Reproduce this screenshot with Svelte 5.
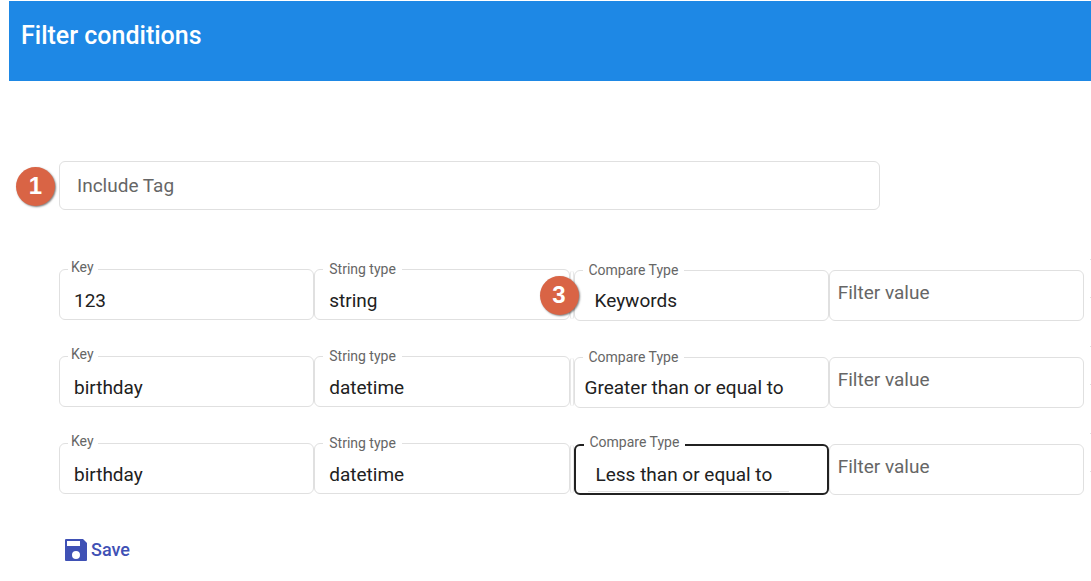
<script>
  const comparisons = ['Keywords', 'Greater than or equal to', 'Less than or equal to'];
  const types = ['string', 'datetime'];

  let includeTag = $state('');
  let rows = $state([
    { key: '123', type: 'string', compare: 'Keywords', value: '', indent: true, active: false, step: 3 },
    { key: 'birthday', type: 'datetime', compare: 'Greater than or equal to', value: '', indent: false, active: false, step: null },
    { key: 'birthday', type: 'datetime', compare: 'Less than or equal to', value: '', indent: true, active: true, step: null }
  ]);
</script>

<header>
  <h1>Filter conditions</h1>
</header>

<main>
  <div class="box tag">
    <span class="badge">1</span>
    <input type="text" aria-label="Include Tag" placeholder="Include Tag" bind:value={includeTag} />
  </div>

  <div class="rows">
    {#each rows as row, i}
      <div class="row">
        <div class="box key">
          <label for="key-{i}">Key</label>
          <input id="key-{i}" type="text" bind:value={row.key} />
        </div>
        <div class="box type">
          <label for="type-{i}">String type</label>
          <select id="type-{i}" bind:value={row.type}>
            {#each types as type}<option>{type}</option>{/each}
          </select>
        </div>
        <div class="divider"></div>
        <div class="box compare" class:indent={row.indent} class:active={row.active}>
          {#if row.step}<span class="badge">{row.step}</span>{/if}
          <label for="compare-{i}">Compare Type</label>
          <select id="compare-{i}" bind:value={row.compare}>
            {#each comparisons as comparison}<option>{comparison}</option>{/each}
          </select>
        </div>
        <div class="box value">
          <input type="text" aria-label="Filter value" placeholder="Filter value" bind:value={row.value} />
        </div>
        <div class="edge"></div>
      </div>
    {/each}
  </div>

  <button type="button">
    <svg viewBox="0 0 22 22" width="22" height="22" aria-hidden="true">
      <path fill="currentColor" fill-rule="evenodd" d="M1 0H18L22 4V21Q22 22 21 22H1Q0 22 0 21V1Q0 0 1 0ZM2 2V7H15V2ZM11 12A4 4 0 1 0 11 20A4 4 0 1 0 11 12Z" />
    </svg>
    Save
  </button>
</main>

<style>
  :global(body) {
    background: #fff;
    overflow-x: hidden;
  }

  header,
  main,
  input,
  select,
  button {
    font-family: Roboto, 'Liberation Sans', sans-serif;
  }

  header {
    box-sizing: border-box;
    height: 80px;
    margin: 1px 0 0 9px;
    padding: 21px 12px;
    background: #1e88e5;
    color: #fff;
  }

  h1 {
    margin: 0;
    font-size: 25px;
    line-height: 28px;
    font-weight: 500;
  }

  main {
    padding: 80px 0 0 59px;
  }

  .box {
    position: relative;
    display: flex;
    box-sizing: border-box;
    height: 51px;
    border: 1px solid #e0e0e0;
    border-radius: 6px;
  }

  .tag {
    width: calc(80% - 5px);
    height: 49px;
  }

  input,
  select {
    box-sizing: border-box;
    width: 100%;
    min-width: 0;
    margin: 0;
    padding: 0 14px;
    border: 0;
    outline: 0;
    background: transparent;
    color: #212121;
    font-size: 19px;
    line-height: 24px;
    appearance: none;
  }

  input::placeholder {
    color: #666;
    opacity: 1;
  }

  .tag input {
    padding: 0 17px;
  }

  .rows {
    display: grid;
    gap: 36px;
    margin-top: 59px;
  }

  .row {
    display: grid;
    grid-template-columns: 1fr 1fr 4px 1fr 1fr 7px;
    height: 51px;
  }

  .key input,
  .type select {
    padding-top: 13px;
  }

  label {
    position: absolute;
    top: -10px;
    left: 8px;
    padding: 0 6px;
    background: #fff;
    color: #666;
    font-size: 14px;
    line-height: 18px;
  }

  .key label {
    top: -12px;
    padding: 0 4px 0 3px;
  }

  .compare,
  .value {
    margin-top: 1px;
  }

  .compare select {
    padding: 10px 10px 0;
  }

  .compare.indent select {
    padding-left: 20px;
  }

  .compare.active {
    border: 2px solid #212121;
  }

  .compare.active label {
    top: -13px;
  }

  .active::after {
    content: '';
    position: absolute;
    bottom: 1px;
    left: 12px;
    width: 80%;
    height: 1px;
    background: #e0e0e0;
  }

  .value input {
    padding: 0 8px 6px;
  }

  .divider {
    height: 48px;
    margin: 2px 0 0;
    border: solid #e8e8e8;
    border-width: 0 1px;
    border-radius: 4px;
  }

  .edge {
    justify-self: end;
    box-sizing: border-box;
    width: 1px;
    height: 39px;
    margin-top: -10px;
    border: solid #e0e0e0;
    border-width: 1px 0;
  }

  .badge {
    position: absolute;
    z-index: 1;
    top: 5px;
    left: -44px;
    width: 39px;
    height: 39px;
    border-radius: 50%;
    background: #d96445;
    box-shadow: 1px 1px 2px rgba(0, 0, 0, 0.5);
    color: #fff;
    font: 700 24px/37px 'Liberation Sans', sans-serif;
    text-align: center;
  }

  .compare .badge {
    left: -35px;
  }

  button {
    display: flex;
    align-items: center;
    gap: 4px;
    margin: 42px 0 0 6px;
    padding: 0;
    border: 0;
    background: none;
    color: #3f51b5;
    font-size: 18px;
    line-height: 28px;
    font-weight: 500;
  }
</style>
